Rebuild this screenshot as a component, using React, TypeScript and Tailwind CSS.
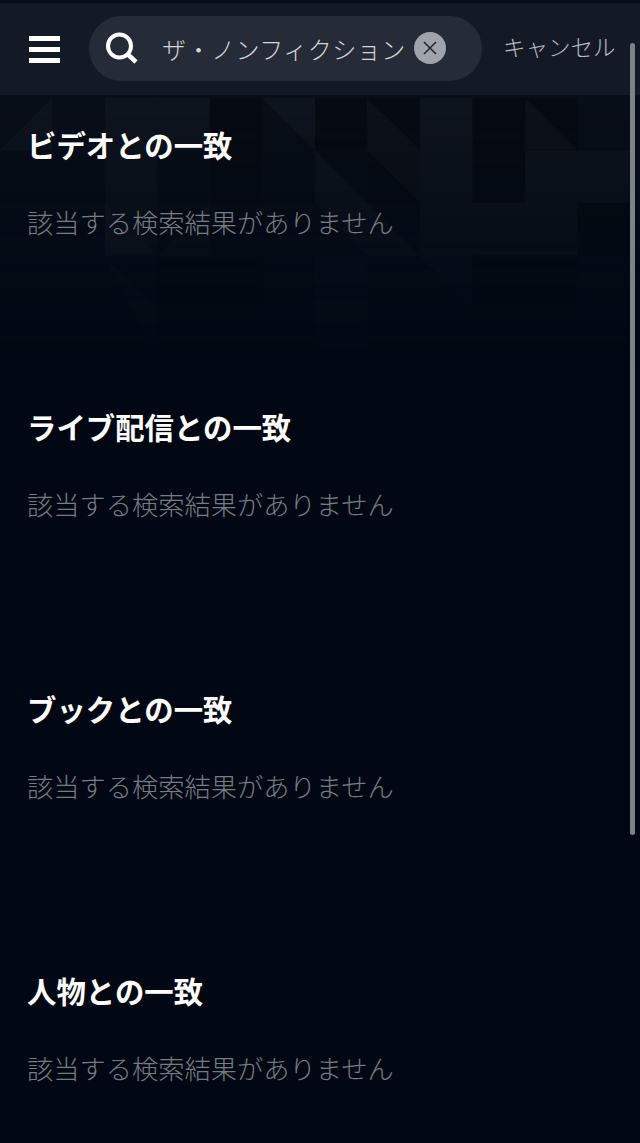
const FONT = "font-['Liberation_Sans','Noto_Sans_CJK_JP',sans-serif]";

const sections = ['ビデオとの一致', 'ライブ配信との一致', 'ブックとの一致', '人物との一致'];

// background tiles: col, row, tone (light / dark)
const tiles: [number, number, 'l' | 'd'][] = [
  [2, 0, 'l'], [3, 0, 'l'], [6, 0, 'd'], [7, 0, 'd'], [8, 0, 'l'], [8, 1, 'l'], [9, 0, 'd'], [9, 1, 'd'],
  [10, 0, 'd'], [7, 1, 'd'], [10, 1, 'l'], [11, 1, 'l'], [2, 1, 'l'], [4, 0, 'd'], [4, 1, 'd'],
  [8, 2, 'l'], [9, 2, 'l'], [10, 2, 'l'], [11, 2, 'd'], [2, 2, 'l'], [6, 3, 'l'], [9, 3, 'd'], [10, 3, 'd'],
  [3, 3, 'd'], [4, 3, 'd'], [6, 4, 'l'],
];

const triangles: string[] = [
  '262,98 315,98 315,150', '315,150 367,203 315,203', '367,98 420,150 420,203 367,150',
  '315,203 367,203 420,256 367,256', '0,150 52,98 52,150', '105,203 157,256 105,256',
  '157,256 210,203 210,256', '420,256 472,256 472,308', '105,256 157,308 157,360',
  '525,98 577,150 525,150',
];

const PatternBg = () => (
  <svg className="absolute left-0 top-0" width="640" height="420" viewBox="0 0 640 420">
    <defs>
      <linearGradient id="fade" x1="0" y1="0" x2="0" y2="1">
        <stop offset="0.25" stopColor="#fff" stopOpacity="1" />
        <stop offset="0.88" stopColor="#fff" stopOpacity="0" />
      </linearGradient>
      <mask id="fadeMask">
        <rect width="640" height="420" fill="url(#fade)" />
      </mask>
    </defs>
    <g mask="url(#fadeMask)">
      <rect width="640" height="420" fill="#080e18" />
      {tiles.map(([c, r, t]) => (
        <rect
          key={`${c}-${r}`}
          x={c * 52.5}
          y={98 + r * 52.5}
          width="52.5"
          height="52.5"
          fill={t === 'l' ? '#ffffff' : '#000000'}
          opacity={t === 'l' ? 0.028 : 0.2}
        />
      ))}
      {triangles.map((p) => (
        <polygon key={p} points={p} fill="#ffffff" opacity="0.028" />
      ))}
    </g>
  </svg>
);

export default function App() {
  return (
    <div className={`relative h-[1143px] w-[640px] overflow-hidden bg-[#010813] ${FONT}`}>
      <PatternBg />

      <div className="relative mt-[3px] flex h-[92px] items-center bg-[#141a25]">
        <div className="ml-[29px] mt-[1px] flex w-[31px] flex-col gap-[6px]">
          <div className="h-[5px] bg-white" />
          <div className="h-[5px] bg-white" />
          <div className="h-[5px] bg-white" />
        </div>

        <div className="mb-[1px] ml-[29px] flex h-[65px] w-[393px] items-center rounded-full bg-[#262c37]">
          <svg className="ml-[15px] shrink-0" width="36" height="36" viewBox="0 0 36 36" fill="none">
            <circle cx="15.5" cy="15" r="11.5" stroke="#fff" strokeWidth="4" />
            <path d="M24 23.5 L32 31" stroke="#fff" strokeWidth="4.5" strokeLinecap="butt" />
          </svg>
          <span className="ml-[22px] translate-y-[2px] whitespace-nowrap text-[24px] font-light leading-none tracking-[0.5px] text-[#d3d5d9]">
            ザ・ノンフィクション
          </span>
          <div className="ml-[8px] flex h-[32px] w-[32px] shrink-0 -translate-y-[1px] items-center justify-center rounded-full bg-[#a0a3ab]">
            <svg width="16" height="16" viewBox="0 0 16 16" fill="none">
              <path d="M2 2 L14 14 M14 2 L2 14" stroke="#1f2530" strokeWidth="1.5" />
            </svg>
          </div>
        </div>

        <span className="ml-[21px] whitespace-nowrap text-[22.5px] font-light leading-none text-[#b9bcc2]">
          キャンセル
        </span>
      </div>

      <div className="absolute left-[630px] top-[43px] h-[792px] w-[5px] rounded-full bg-[#7d8188]" />

      <div className="relative pl-[27px] pt-[32px]">
        {sections.map((title) => (
          <section key={title} className="h-[282px]">
            <h2 className="text-[29.4px] font-bold leading-[40px] text-white">{title}</h2>
            <p className="mt-[37px] text-[26.25px] font-light leading-[40px] text-[#777b83]">該当する検索結果がありません</p>
          </section>
        ))}
      </div>
    </div>
  );
}
